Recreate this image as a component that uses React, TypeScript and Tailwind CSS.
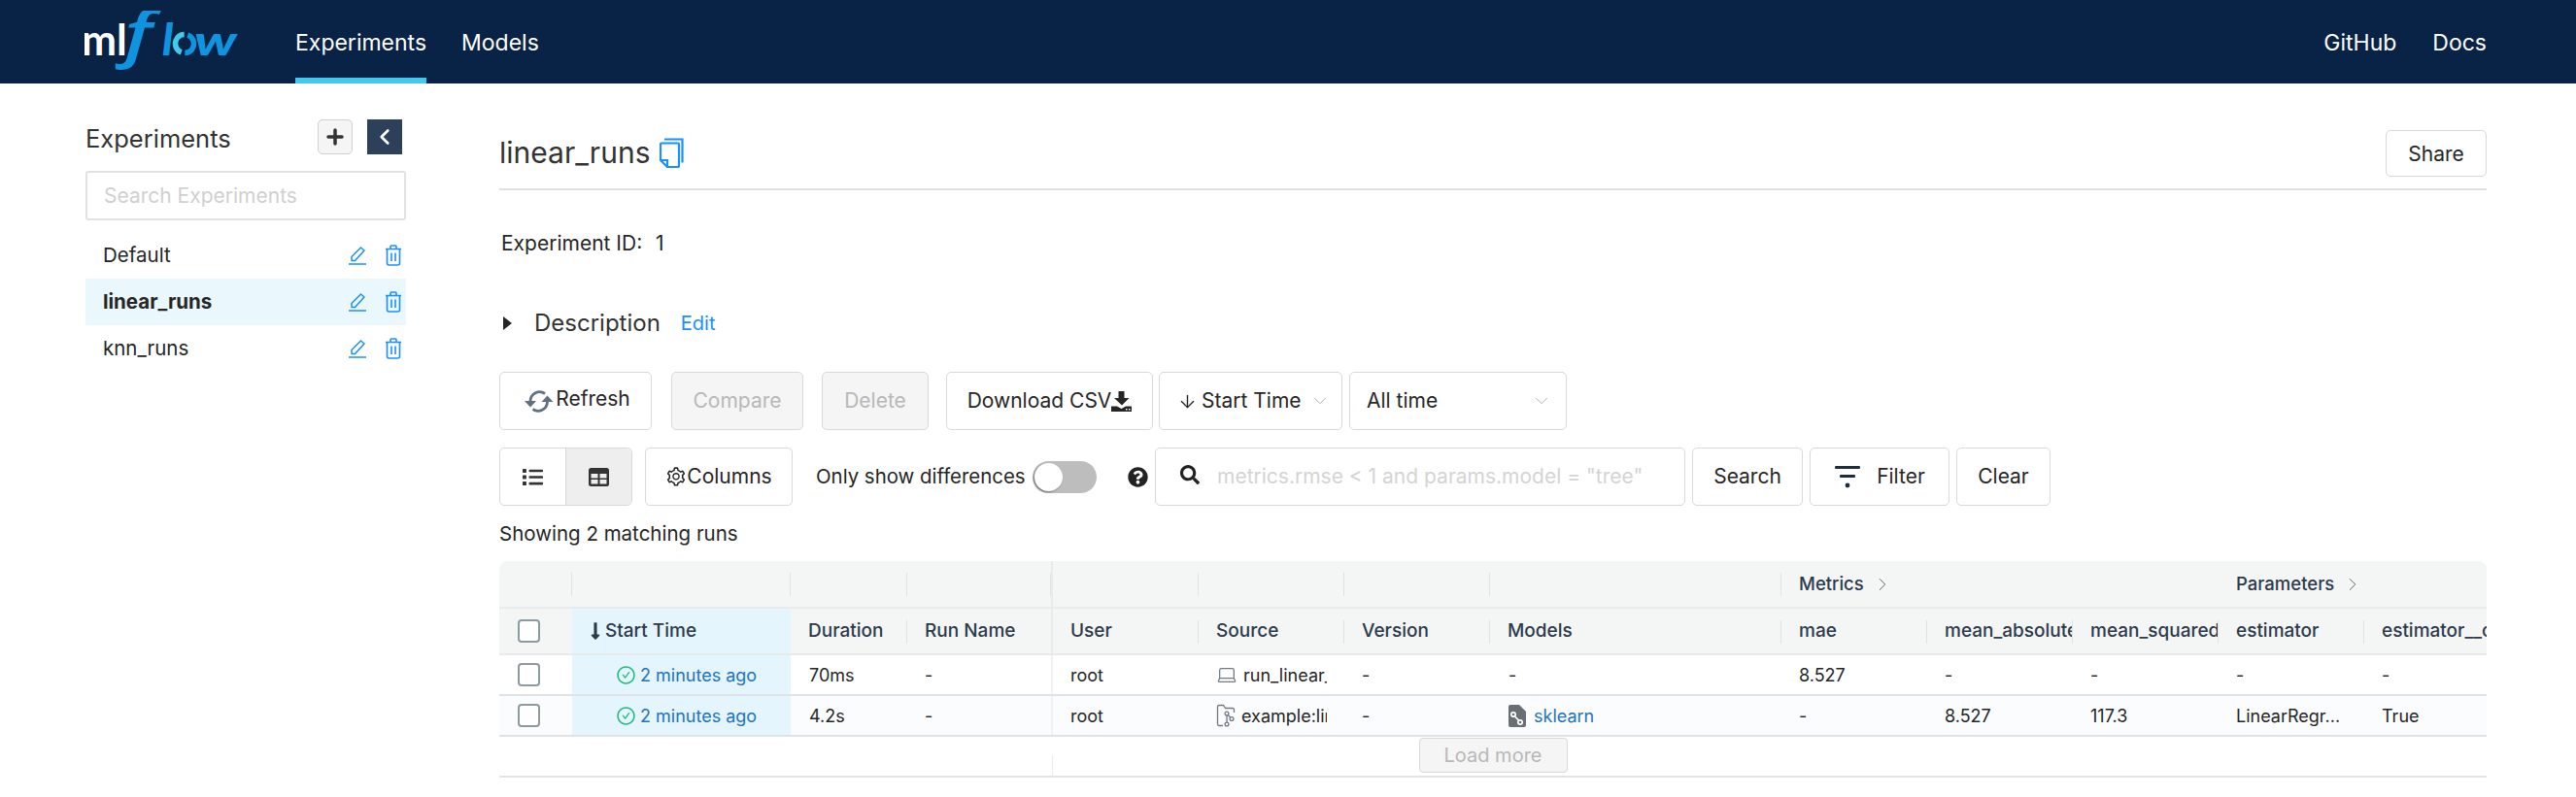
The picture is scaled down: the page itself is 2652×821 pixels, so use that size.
import { ChevronRight, ChevronDown, ArrowDown, Plus, ChevronLeft, Laptop } from 'lucide-react'
import { AiOutlineSetting, AiOutlineCheckCircle } from 'react-icons/ai'
import { FaList, FaQuestionCircle, FaSearch, FaLongArrowAltDown } from 'react-icons/fa'

function Logo() {
  return (
    <svg width="160" height="64" viewBox="0 0 160 64" className="block shrink-0">
      <text x="-3" y="46" fontFamily="Lato, sans-serif" fontSize="43" fontWeight="700" fill="#ffffff">ml</text>
      <text transform="translate(41 46) scale(1.3 1)" fontFamily="'Open Sans', sans-serif" fontStyle="italic" fontSize="64" fontWeight="600" fill="#0f94e0">f</text>
      <text x="80" y="46" fontFamily="Lato, sans-serif" fontStyle="italic" fontSize="46" fontWeight="900" fill="#0f94e0">l</text>
      <circle cx="103" cy="34" r="9.500" fill="none" stroke="#43c9ed" strokeWidth="5.500" strokeDasharray="26 40" transform="rotate(110 103 34)" />
      <circle cx="103" cy="34" r="9.500" fill="none" stroke="#0f94e0" strokeWidth="5.500" strokeDasharray="26 40" transform="rotate(290 103 34)" />
      <text transform="translate(113 46) scale(1.4 1)" fontFamily="Lato, sans-serif" fontStyle="italic" fontSize="42" fontWeight="900" fill="#0f94e0">w</text>
    </svg>
  )
}

function Btn({ className, children }: { className: string; children: React.ReactNode }) {
  return (
    <button className={`h-[60px] border border-[#d9d9d9] rounded-[5px] bg-white text-[21px] text-[#262626] flex items-center justify-center shrink-0 ${className}`}>
      {children}
    </button>
  )
}

function EditIcon() {
  return (
    <svg width="20" height="20" viewBox="0 0 20 20" fill="none" stroke="#1890ff" strokeWidth="1.500" className="shrink-0">
      <path d="M4 15.500v-4L13.500 2l3.500 3-9.500 10.500z" strokeLinejoin="round" />
      <path d="M1 19h18" />
    </svg>
  )
}

function TrashIcon() {
  return (
    <svg width="18" height="22" viewBox="0 0 18 22" fill="none" stroke="#1890ff" strokeWidth="1.600" className="shrink-0 ml-[18px]">
      <path d="M1 4.500h16M6 4.500V2a1 1 0 0 1 1-1h4a1 1 0 0 1 1 1v2.500" />
      <path d="M2.500 4.500V19a2 2 0 0 0 2 2h9a2 2 0 0 0 2-2V4.500" />
      <path d="M7 8.500v8.500M11 8.500v8.500" />
    </svg>
  )
}

function CopyIcon() {
  return (
    <svg width="25" height="31" viewBox="0 0 25 31" fill="none" stroke="#1890ff" strokeWidth="2.200" className="shrink-0 ml-[10px]">
      <path d="M5 1.500h18.500v24" />
      <path d="M2 5.500h17a1 1 0 0 1 1 1V29a1 1 0 0 1-1 1H8L1 23V6.500a1 1 0 0 1 1-1z" strokeLinejoin="round" />
      <path d="M1 23h7v7" />
    </svg>
  )
}

function RefreshIcon() {
  return (
    <svg width="31" height="25" viewBox="0 0 31 25" className="shrink-0">
      <g fill="none" stroke="#5f7080" strokeWidth="2.800">
        <path d="M7 12A9.500 9.500 0 0 1 22 4.500" />
        <path d="M24.500 13A9.500 9.500 0 0 1 9.500 20.500" />
      </g>
      <path d="M1 12h12l-6 6.500zM18.500 13h12l-6-6.500z" fill="#5f7080" />
    </svg>
  )
}

function DownloadIcon() {
  return (
    <svg width="21" height="21" viewBox="0 0 21 21" fill="#262626" className="shrink-0">
      <path d="M7.500 0h6v7h5l-7.500 7.500L3 7h4.500z" />
      <path d="M0 15.500h6l4.500 2.500 4.500-2.500h6V21H0z" />
      <rect x="15" y="18" width="1.500" height="1.500" fill="#ffffff" />
      <rect x="18" y="18" width="1.500" height="1.500" fill="#ffffff" />
    </svg>
  )
}

function TableIcon() {
  return (
    <svg width="21" height="19" viewBox="0 0 21 19" className="shrink-0">
      <rect width="21" height="19" rx="2.500" fill="#333333" />
      <rect x="2.500" y="6" width="7" height="4.500" fill="#eeeeee" />
      <rect x="11.500" y="6" width="7" height="4.500" fill="#eeeeee" />
      <rect x="2.500" y="12" width="7" height="4.500" fill="#eeeeee" />
      <rect x="11.500" y="12" width="7" height="4.500" fill="#eeeeee" />
    </svg>
  )
}

function FilterIcon() {
  return (
    <svg width="28" height="28" viewBox="0 0 28 28" fill="#1f2d3d" className="shrink-0">
      <rect x="1" y="3" width="26" height="3" rx="1" />
      <rect x="6" y="12" width="16" height="3" rx="1" />
      <circle cx="14" cy="23" r="2.400" />
    </svg>
  )
}

function GitIcon() {
  return (
    <svg width="20" height="24" viewBox="0 0 20 24" fill="none" stroke="#6f7a85" strokeWidth="1.300" className="shrink-0">
      <path d="M7 22.500H3a1.500 1.500 0 0 1-1.500-1.500V3A1.500 1.500 0 0 1 3 1.500h4.500l2 3H17A1.500 1.500 0 0 1 18.500 6v3" />
      <circle cx="11" cy="10" r="1.900" />
      <circle cx="16" cy="15.500" r="1.900" />
      <circle cx="11" cy="21" r="1.900" />
      <path d="M11 12v7M12.300 11.500l2.400 2.500" />
    </svg>
  )
}

function ModelIcon() {
  return (
    <svg width="18" height="23" viewBox="0 0 18 23" className="shrink-0">
      <path d="M2 0h9l7 7v14a2 2 0 0 1-2 2H2a2 2 0 0 1-2-2V2a2 2 0 0 1 2-2z" fill="#6a6f75" />
      <g fill="none" stroke="#ffffff" strokeWidth="1.700">
        <circle cx="5" cy="10" r="2.200" />
        <circle cx="12" cy="18" r="2.200" />
        <path d="M6.500 12l4 4" />
      </g>
    </svg>
  )
}

function Checkbox() {
  return <span className="block w-[23px] h-[24px] rounded-[4px] border-2 border-[#8c9ba0] bg-white" />
}

function Sep({ className }: { className: string }) {
  return <span className={`w-px bg-[#dfe3e5] absolute right-0 ${className}`} />
}

const experiments = [
  { name: 'Default', active: false },
  { name: 'linear_runs', active: true },
  { name: 'knn_runs', active: false },
]

const groupCells = [
  { w: 'w-[75px]', label: '' },
  { w: 'w-[225px]', label: '' },
  { w: 'w-[120px]', label: '' },
  { w: 'w-[150px] border-r-2 border-[#e8eaeb]', label: '' },
  { w: 'w-[150px]', label: '' },
  { w: 'w-[150px]', label: '' },
  { w: 'w-[150px]', label: '' },
  { w: 'w-[300px]', label: '' },
  { w: 'w-[450px]', label: 'Metrics' },
  { w: 'w-[300px]', label: 'Parameters' },
]

const headers = [
  { w: 'w-[120px]', label: 'Duration' },
  { w: 'w-[150px] border-r-2 border-[#e8eaeb]', label: 'Run Name' },
  { w: 'w-[150px]', label: 'User' },
  { w: 'w-[150px]', label: 'Source' },
  { w: 'w-[150px]', label: 'Version' },
  { w: 'w-[300px]', label: 'Models' },
  { w: 'w-[150px]', label: 'mae' },
  { w: 'w-[150px]', label: 'mean_absolute_error' },
  { w: 'w-[150px]', label: 'mean_squared_error' },
  { w: 'w-[150px]', label: 'estimator' },
  { w: 'w-[150px]', label: 'estimator__copy_X' },
]

const runs = [
  {
    duration: '70ms', source: 'run_linear_model.py', sourceIcon: <Laptop size={22} strokeWidth={1.4} className="text-[#6f7a85] shrink-0" />,
    model: '-', mae: '8.527', abs: '-', sq: '-', est: '-', copy: '-', bg: 'bg-white', hasModel: false,
  },
  {
    duration: '4.2s', source: 'example:linear', sourceIcon: <GitIcon />,
    model: 'sklearn', mae: '-', abs: '8.527', sq: '117.3', est: 'LinearRegr...', copy: 'True', bg: 'bg-[#fbfcfe]', hasModel: true,
  },
]

export default function App() {
  return (
    <div className="w-[2652px] h-[821px] overflow-hidden bg-white font-['Inter',sans-serif] text-[#262626]">
      <header className="h-[86px] bg-[#082346] flex items-center pl-[87px] pr-[92px] text-white text-[23px]">
        <Logo />
        <nav className="flex items-center ml-[57px] h-full gap-[36px]">
          <a className="h-full flex items-center border-b-[6px] border-[#43c9ed] pt-[8px]">Experiments</a>
          <a className="mt-[2px]">Models</a>
        </nav>
        <div className="ml-auto flex gap-[37px] mt-[2px]">
          <a>GitHub</a>
          <a>Docs</a>
        </div>
      </header>

      <div className="flex">
        <aside className="w-[330px] ml-[88px] shrink-0 pt-[37px]">
          <div className="flex items-center h-[36px]">
            <span className="text-[25.500px] text-[#333] w-[239px] mt-[4px]">Experiments</span>
            <span className="w-[36px] h-[36px] rounded-[5px] border border-[#d0d0d0] bg-[#f5f5f5] flex items-center justify-center">
              <Plus size={24} strokeWidth={3.5} className="text-[#333]" />
            </span>
            <span className="w-[36px] h-[36px] ml-[15px] bg-[#2c4059] flex items-center justify-center">
              <ChevronLeft size={26} strokeWidth={2.5} className="text-white" />
            </span>
          </div>
          <input
            placeholder="Search Experiments"
            className="mt-[17px] block w-[330px] h-[51px] border-2 border-[#e2e2e2] rounded-[3px] pl-[17px] text-[21px] placeholder:text-[#d0d0d0] outline-none"
          />
          <ul className="mt-[12px]">
            {experiments.map((e) => (
              <li key={e.name} className={`h-[48px] flex items-center pl-[18px] pr-[4px] text-[20.500px] ${e.active ? 'bg-[#eaf8fd] font-bold' : ''}`}>
                <span className="flex-1">{e.name}</span>
                <EditIcon />
                <TrashIcon />
              </li>
            ))}
          </ul>
        </aside>

        <main className="ml-[96px] w-[2046px] shrink-0">
          <div className="h-[110px] border-b-2 border-[#e0e0e0] flex items-center pt-[36px] pb-[1px]">
            <span className="text-[30px] text-[#333]">linear_runs</span>
            <CopyIcon />
            <Btn className="ml-auto w-[104px] !h-[48px] pt-[2px]">Share</Btn>
          </div>

          <div className="mt-[42px] pl-[2px] text-[21px] h-[26px] flex items-center">Experiment ID:&nbsp;&nbsp;<span className="ml-[2px]">1</span></div>

          <div className="mt-[54px] flex items-center h-[30px]">
            <span className="ml-[4px] w-0 h-0 border-y-[7px] border-y-transparent border-l-[9px] border-l-[#262626]" />
            <span className="ml-[23px] text-[24px] text-[#333]">Description</span>
            <a className="ml-[21px] text-[20px] text-[#1890ff]">Edit</a>
          </div>

          <div className="mt-[35px] flex">
            <Btn className="w-[157px] gap-[2px] pl-[3px]"><RefreshIcon /><span className="-mt-[4px]">Refresh</span></Btn>
            <Btn className="w-[136px] ml-[20px] !bg-[#f5f5f5] !text-[#b8b8b8]">Compare</Btn>
            <Btn className="w-[110px] ml-[19px] !bg-[#f5f5f5] !text-[#b8b8b8]">Delete</Btn>
            <Btn className="w-[213px] ml-[18px]">Download CSV<DownloadIcon /></Btn>
            <Btn className="w-[189px] ml-[6px] justify-start pl-[18px]">
              <ArrowDown size={21} strokeWidth={1.6} /><span className="ml-[4px]">Start Time</span>
              <ChevronDown size={22} strokeWidth={1} className="ml-[8px] text-[#aaa]" />
            </Btn>
            <Btn className="w-[224px] ml-[7px] justify-start pl-[17px]">
              All time
              <ChevronDown size={22} strokeWidth={1} className="ml-auto mr-[14px] text-[#aaa]" />
            </Btn>
          </div>

          <div className="mt-[18px] flex items-center">
            <div className="w-[137px] h-[60px] border border-[#d9d9d9] rounded-[5px] flex overflow-hidden shrink-0">
              <span className="w-[68px] flex items-center justify-center border-r border-[#d9d9d9]"><FaList size={21} className="text-[#333]" /></span>
              <span className="flex-1 bg-[#eeeeee] flex items-center justify-center"><TableIcon /></span>
            </div>
            <Btn className="w-[152px] ml-[13px]"><AiOutlineSetting size={22} />Columns</Btn>
            <span className="ml-[24px] w-[216px] text-[20.400px] whitespace-nowrap">Only show differences</span>
            <span className="ml-[7px] w-[66px] h-[33px] rounded-full bg-[#bdbdbd] relative shrink-0">
              <span className="absolute left-[2px] top-[2px] w-[29px] h-[29px] rounded-full bg-white shadow-[-1px_1px_2px_rgba(0,0,0,0.4)]" />
            </span>
            <FaQuestionCircle size={21} className="ml-[32px] text-[#222] shrink-0" />
            <div className="ml-[7px] w-[546px] h-[60px] border border-[#d9d9d9] rounded-[5px] flex items-center pl-[25px] shrink-0">
              <FaSearch size={20} className="text-[#222] -mt-[4px] shrink-0" />
              <span className="ml-[18px] text-[21px] text-[#d4d4d4] whitespace-nowrap">metrics.rmse &lt; 1 and params.model = "tree"</span>
            </div>
            <Btn className="w-[114px] ml-[7px]">Search</Btn>
            <Btn className="w-[144px] ml-[7px] gap-[16px]"><FilterIcon />Filter</Btn>
            <Btn className="w-[97px] ml-[7px]">Clear</Btn>
          </div>

          <div className="mt-[16px] h-[26px] text-[20.500px] flex items-center">Showing 2 matching runs</div>

          <div className="mt-[15px] w-[2046px] overflow-hidden relative">
            <div className="w-[2070px]">
              <div className="flex h-[49px] bg-[#f4f6f6] border-b-2 border-[#e8eaeb] rounded-t-[8px] w-[2046px] text-[18.500px] text-[#2c3a4b] font-medium overflow-hidden">
                {groupCells.map((c, i) => (
                  <div key={i} className={`${c.w} shrink-0 relative flex items-center pl-[18px]`}>
                    {c.label && (
                      <>
                        <span>{c.label}</span>
                        <ChevronRight size={22} strokeWidth={1} className="ml-[8px] text-[#555]" />
                      </>
                    )}
                    {i < 8 && <Sep className="top-[12px] h-[24px]" />}
                  </div>
                ))}
              </div>
              <div className="flex h-[48px] bg-[#f4f6f6] border-b-2 border-[#e8eaeb] text-[19px] text-[#2c3a4b] font-medium">
                <div className="w-[75px] shrink-0 flex items-center pl-[19px]"><Checkbox /></div>
                <div className="w-[225px] shrink-0 bg-[#e4f5fd] flex items-center pl-[14px]">
                  <FaLongArrowAltDown size={20} /><span>Start Time</span>
                </div>
                {headers.map((h, i) => (
                  <div key={h.label} className={`${h.w} shrink-0 relative flex items-center pl-[18px] overflow-hidden whitespace-nowrap`}>
                    {h.label}
                    {i !== 1 && i < 10 && <Sep className="top-[12px] h-[24px] z-10" />}
                  </div>
                ))}
              </div>
              {runs.map((r) => (
                <div key={r.duration} className={`flex h-[42px] border-b-2 border-[#dfe3e6] text-[18px] ${r.bg}`}>
                  <div className="w-[75px] shrink-0 flex items-center pl-[19px]"><Checkbox /></div>
                  <div className="w-[225px] shrink-0 bg-[#e4f5fd] flex items-center pl-[45px] text-[#2374bb]">
                    <AiOutlineCheckCircle size={21} className="text-[#21ba7a]" /><span className="ml-[4px]">2 minutes ago</span>
                  </div>
                  <div className="w-[120px] shrink-0 flex items-center pl-[19px]">{r.duration}</div>
                  <div className="w-[150px] shrink-0 flex items-center pl-[18px] border-r-2 border-[#f0f1f2]">-</div>
                  <div className="w-[150px] shrink-0 flex items-center pl-[18px]">root</div>
                  <div className="w-[132px] mr-[18px] shrink-0 flex items-center pl-[18px] overflow-hidden whitespace-nowrap gap-[6px]">
                    {r.sourceIcon}<span>{r.source}</span>
                  </div>
                  <div className="w-[150px] shrink-0 flex items-center pl-[18px]">-</div>
                  <div className="w-[300px] shrink-0 flex items-center pl-[19px]">
                    {r.hasModel ? (
                      <>
                        <ModelIcon /><span className="ml-[8px] text-[#2374bb]">{r.model}</span>
                      </>
                    ) : r.model}
                  </div>
                  <div className="w-[150px] shrink-0 flex items-center pl-[18px]">{r.mae}</div>
                  <div className="w-[150px] shrink-0 flex items-center pl-[18px]">{r.abs}</div>
                  <div className="w-[150px] shrink-0 flex items-center pl-[18px]">{r.sq}</div>
                  <div className="w-[150px] shrink-0 flex items-center pl-[18px]">{r.est}</div>
                  <div className="w-[150px] shrink-0 flex items-center pl-[18px]">{r.copy}</div>
                </div>
              ))}
            </div>
            <div className="h-[42px] w-[2046px] border-b-2 border-[#e3e3e3] flex justify-center pt-[1px] relative">
              <button className="w-[153px] h-[36px] bg-[#f5f5f5] border border-[#d9d9d9] rounded-[4px] text-[20px] text-[#b8b8b8]">Load more</button>
              <span className="absolute left-[569px] bottom-0 h-[21px] w-px bg-[#e8eaeb]" />
            </div>
          </div>
        </main>
      </div>
    </div>
  )
}
